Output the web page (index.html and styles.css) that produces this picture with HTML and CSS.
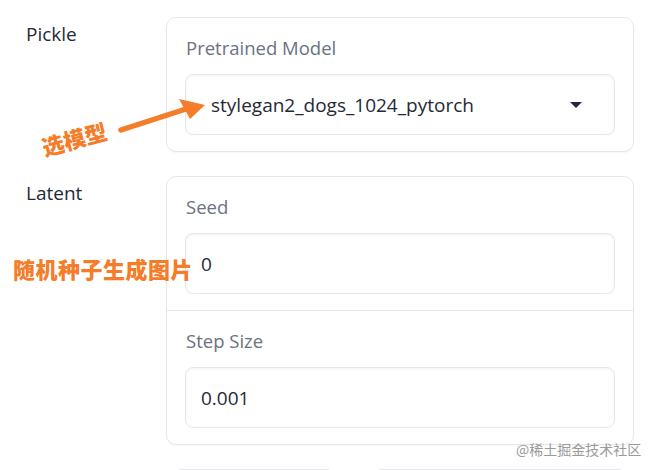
FILE: index.html
```html
<!DOCTYPE html>
<html lang="zh">
<head>
<meta charset="utf-8">
<link rel="stylesheet" href="styles.css">
</head>
<body>
<div class="page">
  <div class="row">
    <div class="row-label">Pickle</div>
    <div class="card">
      <div class="section">
        <div class="field-label">Pretrained Model</div>
        <div class="select">
          <span class="select-value">stylegan2_dogs_1024_pytorch</span>
          <span class="caret"></span>
        </div>
      </div>
    </div>
  </div>
  <div class="row">
    <div class="row-label">Latent</div>
    <div class="card">
      <div class="section">
        <div class="field-label">Seed</div>
        <div class="input">0</div>
      </div>
      <div class="section section-divided">
        <div class="field-label">Step Size</div>
        <div class="input">0.001</div>
      </div>
    </div>
  </div>
  <div class="row">
    <div class="row-label"></div>
    <div class="buttons">
      <div class="btn btn-a"></div>
      <div class="btn btn-b"></div>
    </div>
  </div>

  <svg class="arrow" width="100" height="50" viewBox="0 0 100 50">
    <line x1="4" y1="42" x2="72" y2="20" stroke="#f57c28" stroke-width="5.5" stroke-linecap="round"/>
    <polygon points="62,11 88,17 73,31" fill="#f57c28"/>
  </svg>
  <div class="note note-model">选模型</div>
  <div class="note note-seed">随机种子生成图片</div>
  <div class="watermark">@稀土掘金技术社区</div>
</div>
</body>
</html>
```
FILE: styles.css
```css
html, body {
  margin: 0;
  padding: 0;
  background: #ffffff;
}
body {
  font-family: "Open Sans", "Noto Sans", sans-serif;
  color: #1f2937;
  width: 653px;
  height: 470px;
  overflow: hidden;
}
.page {
  position: relative;
  padding: 17px 19px 0 26px;
  display: flex;
  flex-direction: column;
  gap: 24px;
}
.row {
  display: grid;
  grid-template-columns: 140px 468px;
}
.row-label {
  font-size: 19px;
  line-height: 24px;
  padding-top: 5px;
  color: #1f2937;
}
.card {
  border: 1px solid #e5e7eb;
  border-radius: 10px;
  background: #fff;
  box-shadow: 0 1px 2px rgba(0,0,0,0.04);
}
.section {
  padding: 18px 18px 16px 18px;
}
.section-divided {
  border-top: 1px solid #e5e7eb;
}
.field-label {
  font-size: 18.5px;
  line-height: 24px;
  color: #6b7280;
  padding-left: 1px;
  margin-bottom: 14px;
}
.select, .input {
  box-sizing: border-box;
  height: 61px;
  border: 1px solid #e5e7eb;
  border-radius: 8px;
  background: #fff;
  box-shadow: inset 0 1px 3px rgba(0,0,0,0.05);
  display: flex;
  align-items: center;
  font-size: 19px;
  color: #1f2937;
}
.select {
  padding: 0 32px 0 25px;
  justify-content: space-between;
}
.input {
  padding: 0 15px;
}
.caret {
  width: 0;
  height: 0;
  border-left: 6px solid transparent;
  border-right: 6px solid transparent;
  border-top: 6px solid #1f2937;
}
.buttons {
  display: flex;
  gap: 38px;
  padding-left: 7px;
}
.btn {
  height: 20px;
  border: 1px solid #e5e7eb;
  border-radius: 8px;
}
.btn-a { width: 160px; }
.btn-b { width: 252px; }

.arrow {
  position: absolute;
  left: 117px;
  top: 88px;
}
.note {
  position: absolute;
  font-family: "Noto Sans CJK SC", sans-serif;
  font-weight: 900;
  color: #f57c28;
}
.note-model {
  left: 41px;
  top: 126px;
  font-size: 22px;
  line-height: 24px;
  transform: rotate(-15deg);
  transform-origin: center;
}
.note-seed {
  left: 13px;
  top: 255px;
  font-size: 22px;
  line-height: 26px;
  letter-spacing: 0.5px;
}
.watermark {
  position: absolute;
  left: 516px;
  top: 440px;
  font-family: "Noto Sans CJK SC", sans-serif;
  font-size: 14px;
  line-height: 18px;
  color: #9a9a9a;
}
```
